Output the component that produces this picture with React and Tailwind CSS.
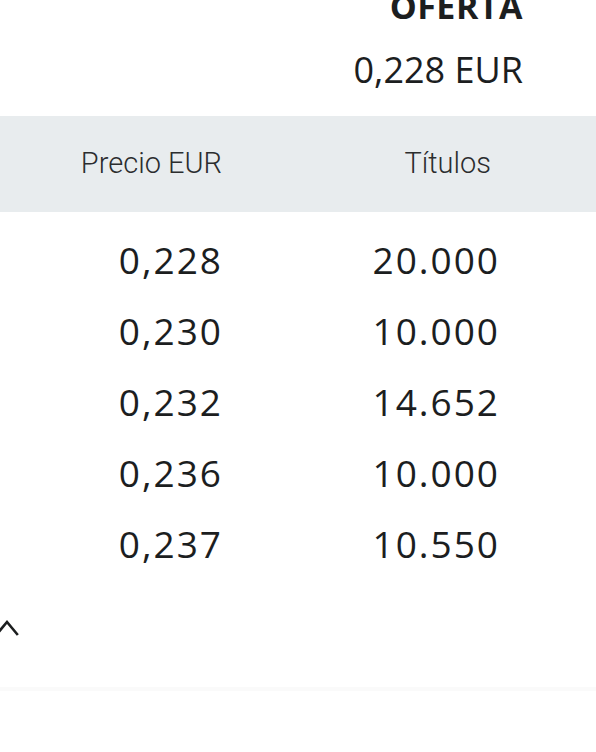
const rows = [
  { price: "0,228", qty: "20.000" },
  { price: "0,230", qty: "10.000" },
  { price: "0,232", qty: "14.652" },
  { price: "0,236", qty: "10.000" },
  { price: "0,237", qty: "10.550" },
];

export default function App() {
  return (
    <div className="w-[596px] h-[752px] bg-white overflow-hidden text-[#1c1e1f]" style={{ fontFamily: '"Open Sans", sans-serif' }}>
      <div className="flex flex-col items-end pr-[73px] -mt-[14px]">
        <div className="text-[34px] font-bold leading-[40px] tracking-[0.5px]">OFERTA</div>
        <div className="text-[36px] leading-[44px] mt-[22px]">0,228 EUR</div>
      </div>

      <div className="mt-[24px] h-[96px] bg-[#e8ecee] flex items-center text-[29px] font-light text-[#2b2d2e]" style={{ fontFamily: "Roboto, sans-serif" }}>
        <div className="w-[222px] text-right">Precio EUR</div>
        <div className="w-[491px] text-right -ml-[222px]">Títulos</div>
      </div>

      <div className="pt-[12px]">
        {rows.map((r, i) => (
          <div key={i} className="h-[71px] flex items-center text-[37px]">
            <div className="w-[223px] text-right tracking-[2px]">{r.price}</div>
            <div className="w-[277px] text-right tracking-[2px]">{r.qty}</div>
          </div>
        ))}
      </div>

      <div className="mt-[28px] h-[40px] flex items-center -ml-[5px]">
        <svg width="26" height="18" viewBox="0 0 26 18" fill="none" stroke="#1c1e1f" strokeWidth="2.6" strokeLinecap="square">
          <path d="M2 16 L12 4 L22 16" />
        </svg>
      </div>

      <div className="mt-[40px] h-[4px] bg-[#fafafa]" />
    </div>
  );
}
